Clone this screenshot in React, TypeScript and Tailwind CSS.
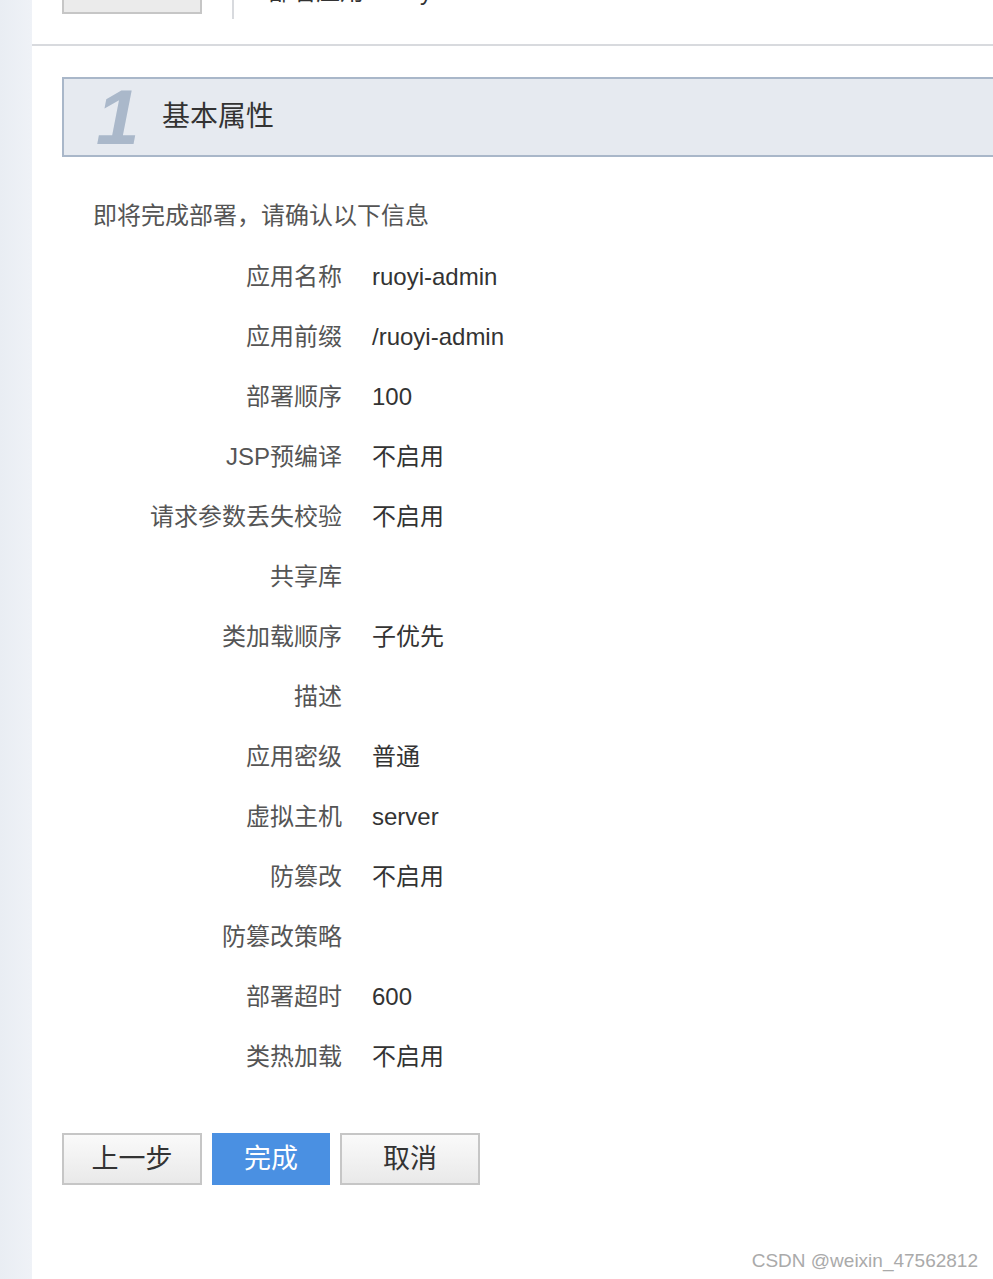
import React from 'react';

const FONT = '"Liberation Sans", "Noto Sans CJK SC", Arial, sans-serif';

const ROWS: { label: string; value: string }[] = [
  { label: '应用名称', value: 'ruoyi-admin' },
  { label: '应用前缀', value: '/ruoyi-admin' },
  { label: '部署顺序', value: '100' },
  { label: 'JSP预编译', value: '不启用' },
  { label: '请求参数丢失校验', value: '不启用' },
  { label: '共享库', value: '' },
  { label: '类加载顺序', value: '子优先' },
  { label: '描述', value: '' },
  { label: '应用密级', value: '普通' },
  { label: '虚拟主机', value: 'server' },
  { label: '防篡改', value: '不启用' },
  { label: '防篡改策略', value: '' },
  { label: '部署超时', value: '600' },
  { label: '类热加载', value: '不启用' },
];

function GrayButton({ children }: { children: React.ReactNode }) {
  return (
    <button className="w-[140px] h-[52px] border-2 border-[#c6c6c6] bg-gradient-to-b from-[#fafafa] to-[#e9e9e9] text-[27px] text-[#333] leading-none">
      {children}
    </button>
  );
}

export default function App() {
  return (
    <div className="flex min-h-[1279px] bg-white overflow-hidden" style={{ fontFamily: FONT }}>
      {/* left strip */}
      <div className="w-[32px] shrink-0 bg-gradient-to-r from-[#e9edf3] to-[#eff2f7]" />

      <div className="flex-1 flex flex-col relative">
        {/* clipped top toolbar */}
        <div className="h-[44px] px-[30px] overflow-hidden">
          <div className="flex items-start -mt-[36px]">
            <button className="w-[140px] h-[50px] border-2 border-[#c6c6c6] bg-[#ebebeb] text-[24px] text-[#333]">
              返回
            </button>
            <div className="w-[2px] h-[55px] bg-[#d8dade] ml-[30px]" />
            <div className="ml-[34px] mt-[10px] text-[24px] text-[#333] whitespace-nowrap">部署应用 - ruoyi</div>
          </div>
        </div>
        <div className="h-[2px] bg-[#d8dade]" />

        <div className="pl-[30px] pt-[31px]">
          {/* section header */}
          <div className="h-[80px] border-2 border-r-0 border-[#a9b7c9] bg-[#e6eaf0] flex items-center">
            <span
              className="ml-[32px] w-[36px] text-[78px] font-bold italic text-[#aab8ca] leading-none"
              style={{ fontFamily: '"Liberation Sans", Arial, sans-serif' }}
            >
              1
            </span>
            <span className="ml-[30px] text-[28px] text-[#333]">基本属性</span>
          </div>

          <div className="mt-[29px] h-[60px] flex items-center pl-[31px] text-[24px] text-[#555]">
            即将完成部署，请确认以下信息
          </div>

          <div className="flex flex-col">
            {ROWS.map(r => (
              <div key={r.label} className="h-[60px] flex items-center text-[24px] pt-[1px]">
                <div className="w-[280px] text-right text-[#555]">{r.label}</div>
                <div className="pl-[30px] text-[#333]">{r.value}</div>
              </div>
            ))}
          </div>

          <div className="mt-[47px] flex gap-[10px]">
            <GrayButton>上一步</GrayButton>
            <button className="w-[118px] h-[52px] bg-[#4a90e2] text-white text-[27px] leading-none">完成</button>
            <GrayButton>取消</GrayButton>
          </div>
        </div>

        <div className="absolute right-[15px] bottom-[4px] text-[19px] text-[#aaa]">CSDN @weixin_47562812</div>
      </div>
    </div>
  );
}
